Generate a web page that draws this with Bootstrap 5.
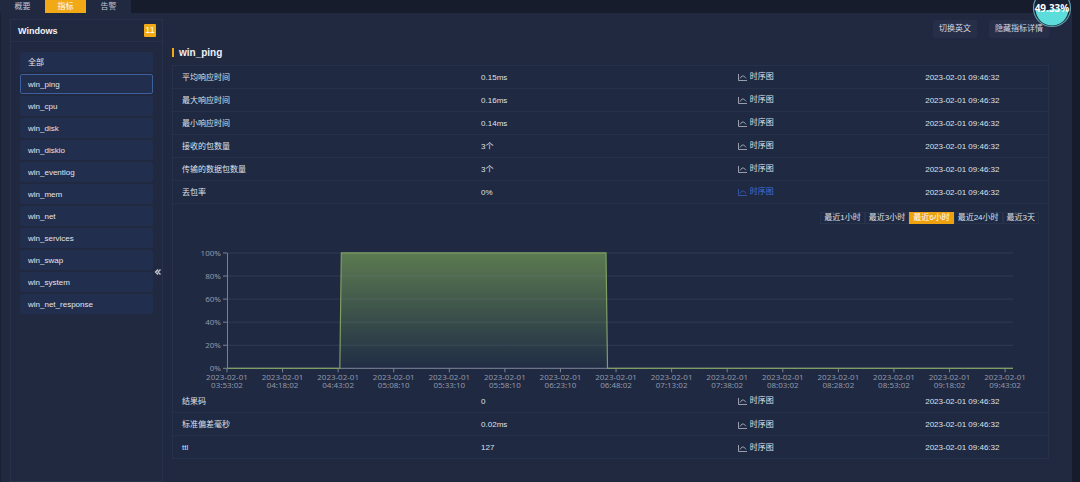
<!DOCTYPE html>
<html lang="zh-CN">
<head>
<meta charset="utf-8">
<meta name="viewport" content="width=device-width, initial-scale=1">
<title>win_ping</title>
<link href="https://cdn.jsdelivr.net/npm/bootstrap@5.3.0/dist/css/bootstrap.min.css" rel="stylesheet">
<style>
:root { --line: #27324a; --amber: #f2a916; }
body { font-family: "Liberation Sans", "Noto Sans CJK SC", sans-serif; font-size: 8px; line-height: 12px; color: #dde1ea; background: #171c2c; overflow: hidden; }
button { font-family: inherit; }
.shell { min-height: 100vh; padding-right: 8px; }
.tabs { height: 13px; }
.tabs .nav-link { width: 45px; height: 13px; padding: 0; font-size: 8px; color: #c2c7d3; background: #212941; border: 0; border-radius: 0; text-align: center; line-height: 12px; }
.tabs .nav-link.active { width: 41px; background: var(--amber); color: #fff; }
.workspace { background: #212941; border-left: 1px solid #1a2134; padding-left: 9px; }
.side { width: 153px; border: 1px solid #27314a; margin-top: 6px; }
.side-head { height: 22px; padding: 0 6px 0 7px; border-bottom: 1px solid #27314a; }
.side-title { font-size: 9px; color: #f2f4f8; }
.count { background: var(--amber); border-radius: 1px; padding: 0; width: 12px; height: 13px; line-height: 13px; font-size: 9px; font-weight: 400; }
.metrics { padding: 10px 9px; gap: 2px; }
.metric-item { height: 20px; padding: 0 7px; border: 1px solid transparent; border-radius: 2px; background: #212e4d; color: #e1e5ee; line-height: 19px; text-align: left; }
.metric-item.active { border-color: #3c5f9d; }
.collapse-btn { right: 0; top: 247px; width: 8px; height: 10px; line-height: 0; background: none; color: #c5cad6; }
.detail { padding: 7px 23px 0 9px; min-width: 0; }
.tools { gap: 12px; }
.tool-btn { height: 18px; padding: 0 6px; line-height: 18px; font-size: 8px; background: #272f48; color: #d5d9e3; border: 0; border-radius: 2px; }
.metric-name { height: 9px; line-height: 9px; font-size: 10px; font-weight: 700; color: #eff1f6; border-left: 2px solid var(--amber); padding-left: 5px; margin: 10px 0 8px; }
.readings { border: 1px solid var(--line); border-collapse: collapse; table-layout: fixed; }
.readings > tbody > tr > td { height: 23px; padding: 1px 9px 0; border: 0; border-bottom: 1px solid var(--line); color: #dde1ea; background: #1f2942; vertical-align: middle; }
.readings > tbody > tr > td.chart-cell { padding: 8px 9px 0; border-bottom: 0; }
.trend { color: inherit; text-decoration: none; gap: 3px; vertical-align: middle; }
.trend.on { color: #3f6fd8; }
.trend svg { width: 9px; height: 8px; opacity: .8; }
.ranges .btn { height: 12px; padding: 0 3px; border: 1px solid #27324b; border-radius: 0; font-size: 8px; line-height: 10px; color: #dde1ea; }
.ranges .btn.active { background: #efa20f; border-color: #efa20f; color: #fff; }
.plot text { font-family: "Noto Sans", sans-serif; font-size: 8px; fill: #9298a7; }
.gauge { right: 8px; top: -12px; width: 40px; height: 40px; z-index: 3; }
.gauge text { font-family: "Noto Sans", sans-serif; font-size: 10px; font-weight: 700; fill: #fff; }
</style>
</head>
<body>
<svg class="d-none"><symbol id="line-icon" viewBox="0 0 9 8"><path d="M.5 1v6.500h8.500M2 5.500L4 3h1.800L8 5.300" fill="none" stroke="currentColor" stroke-width=".8"/></symbol></svg>
<div class="shell d-flex flex-column position-relative">
  <nav class="nav tabs" aria-label="视图">
    <button class="nav-link">概要</button><button class="nav-link active">指标</button><button class="nav-link">告警</button>
  </nav>
  <div class="workspace d-flex flex-grow-1">
    <aside class="side position-relative flex-shrink-0">
      <div class="side-head d-flex align-items-center justify-content-between"><strong class="side-title">Windows</strong><span class="badge count">11</span></div>
      <div class="metrics d-flex flex-column" id="metrics"></div>
      <button class="collapse-btn position-absolute border-0 p-0" aria-label="收起"><svg width="8" height="8" viewBox="0 0 8 8"><path d="M4 1.500L1.500 4 4 6.500M6.500 1.500L4 4l2.500 2.500" fill="none" stroke="currentColor" stroke-width="1.300"/></svg></button>
    </aside>
    <main class="detail flex-grow-1">
      <div class="tools d-flex justify-content-end">
        <button class="tool-btn">切换英文</button><button class="tool-btn">隐藏指标详情</button>
      </div>
      <h1 class="metric-name">win_ping</h1>
      <table class="table readings mb-0">
        <colgroup><col style="width:34.200%"><col style="width:29.300%"><col style="width:21.400%"><col></colgroup>
        <tbody id="readings"></tbody>
      </table>
    </main>
  </div>
  <svg class="gauge position-absolute" viewBox="0 0 40 40" role="img" aria-label="49.33%">
    <circle cx="20" cy="20" r="18.500" fill="#182034" stroke="#5f9da9" stroke-width="1.200"/>
    <path d="M3.500 21Q9 24 16 22T28 21T36.500 21A16.500 16.500 0 0 1 3.500 21Z" fill="#5cdcda"/>
    <text x="20" y="24" text-anchor="middle">49.33%</text>
  </svg>
</div>
<script src="https://cdn.jsdelivr.net/npm/bootstrap@5.3.0/dist/js/bootstrap.bundle.min.js"></script>
<script>
const names = ['全部','win_ping','win_cpu','win_disk','win_diskio','win_eventlog','win_mem','win_net','win_services','win_swap','win_system','win_net_response'];
document.getElementById('metrics').innerHTML = names.map((n, i) =>
  `<button class="metric-item${i === 1 ? ' active' : ''}">${n}</button>`).join('');

const row = ([name, value, on]) => `<tr><td>${name}</td><td>${value}</td>
  <td><a href="#" class="trend d-inline-flex align-items-center${on ? ' on' : ''}"><svg aria-hidden="true"><use href="#line-icon"/></svg>时序图</a></td>
  <td>2023-02-01 09:46:32</td></tr>`;

const times = ['03:53:02','04:18:02','04:43:02','05:08:10','05:33:10','05:58:10','06:23:10','06:48:02','07:13:02','07:38:02','08:03:02','08:28:02','08:53:02','09:18:02','09:43:02'];
const base = 144.5, top100 = 29;
let axis = '';
for (let i = 0; i <= 5; i++) {
  const y = base - i * (base - top100) / 5;
  axis += `<path d="M45 ${y}H832" stroke="#8ba0b8" stroke-opacity=".16"/><path d="M41 ${y}h4" stroke="#7b8394"/><text x="39" y="${y + 3}" text-anchor="end">${i * 20}%</text>`;
}
times.forEach((t, i) => {
  const x = 45 + i * 55.65;
  axis += `<path d="M${x} ${base}v4" stroke="#7b8394"/><text y="156" text-anchor="middle"><tspan x="${x}">2023-02-01</tspan><tspan x="${x}" dy="8">${t}</tspan></text>`;
});
const chart = `<tr><td colspan="4" class="chart-cell">
  <div class="ranges d-flex justify-content-end">${['最近1小时','最近3小时','最近6小时','最近24小时','最近3天'].map((r, i) => `<button class="btn${i === 2 ? ' active' : ''}">${r}</button>`).join('')}</div>
  <svg class="plot d-block w-100" viewBox="0 0 858 166" role="img" aria-label="丢包率">
    <defs><linearGradient id="loss" x2="0" y2="1"><stop stop-color="#5b7a50"/><stop offset="1" stop-color="#202d45"/></linearGradient></defs>
    <path d="M158 ${base}L159.500 ${top100}H424.500L426 ${base}Z" fill="url(#loss)"/>
    ${axis}
    <path d="M45.500 ${top100}V${base}H832" fill="none" stroke="#7b8394"/>
    <path d="M45.500 ${base}H158L159.500 ${top100}H424.500L426 ${base}H832" fill="none" stroke="#7f9e63" stroke-width="1.200"/>
  </svg></td></tr>`;
const before = [['平均响应时间','0.15ms'],['最大响应时间','0.16ms'],['最小响应时间','0.14ms'],['接收的包数量','3个'],['传输的数据包数量','3个'],['丢包率','0%',true]];
const after = [['结果码','0'],['标准偏差毫秒','0.02ms'],['ttl','127']];
document.getElementById('readings').innerHTML = before.map(row).join('') + chart + after.map(row).join('');
</script>
</body>
</html>
